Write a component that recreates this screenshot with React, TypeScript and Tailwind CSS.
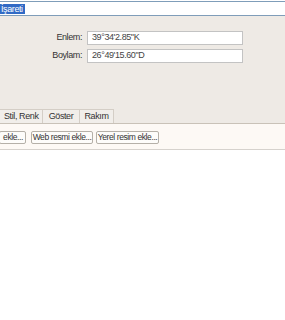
export default function App() {
  return (
    <div className="w-[285px] h-[320px] bg-white overflow-hidden whitespace-nowrap text-[9px] tracking-[-0.4px] text-[#222] [font-family:'Liberation_Sans',Arial,sans-serif]">
      {/* title field */}
      <div className="h-px bg-white" />
      <div className="h-[15px] border-y border-[#7f9db9] bg-white flex items-center">
        <span className="bg-[#316ac5] text-white leading-[10px] h-[10px] pl-[1px] pr-[2px]">İşareti</span>
      </div>

      {/* coordinates */}
      <div className="bg-[#eeeae5] h-[108px] flex flex-col">
        <div className="pt-[15px] flex flex-col gap-[4px]">
          <div className="flex items-center">
            <label className="w-[82px] text-right text-[#333]">Enlem:</label>
            <div className="ml-[5px] w-[156px] h-[14px] border border-[#c3c3c3] bg-white flex items-center pl-[4px] text-[#444]">
              39°34'2.85"K
            </div>
          </div>
          <div className="flex items-center">
            <label className="w-[82px] text-right text-[#333]">Boylam:</label>
            <div className="ml-[5px] w-[156px] h-[14px] border border-[#c3c3c3] bg-white flex items-center pl-[4px] text-[#444]">
              26°49'15.60"D
            </div>
          </div>
        </div>

        {/* tabs */}
        <div className="mt-auto flex h-[15px] border-b border-[#c9c2b8]">
          <div className="w-[44px] -ml-px border-t border-r border-[#d4cec6] bg-[#f1eeea] flex items-center pl-[5px] text-[#333]">Stil, Renk</div>
          <div className="w-[37px] border-t border-r border-[#d4cec6] bg-[#f1eeea] flex items-center justify-center text-[#333]">Göster</div>
          <div className="w-[34px] border-t border-r border-[#d4cec6] bg-[#f1eeea] flex items-center justify-center text-[#333]">Rakım</div>
        </div>
      </div>

      {/* tab panel */}
      <div className="bg-[#fdf9f5] h-[26px] border-b border-[#d6d2cd] flex items-start pt-[7px]">
        <button className="-ml-px w-[27px] h-[13px] border border-[#b5b0a8] rounded-[2px] bg-[#fdfcfa] flex items-center justify-end pr-[2px] text-[8.5px] tracking-[-0.4px] text-[#333]">ekle...</button>
        <button className="ml-[5px] w-[62px] h-[13px] border border-[#b5b0a8] rounded-[2px] bg-[#fdfcfa] flex items-center justify-center text-[8.5px] tracking-[-0.4px] text-[#333]">Web resmi ekle...</button>
        <button className="ml-[3px] w-[63px] h-[13px] border border-[#b5b0a8] rounded-[2px] bg-[#fdfcfa] flex items-center justify-center text-[8.5px] tracking-[-0.4px] text-[#333]">Yerel resim ekle...</button>
      </div>
    </div>
  );
}
